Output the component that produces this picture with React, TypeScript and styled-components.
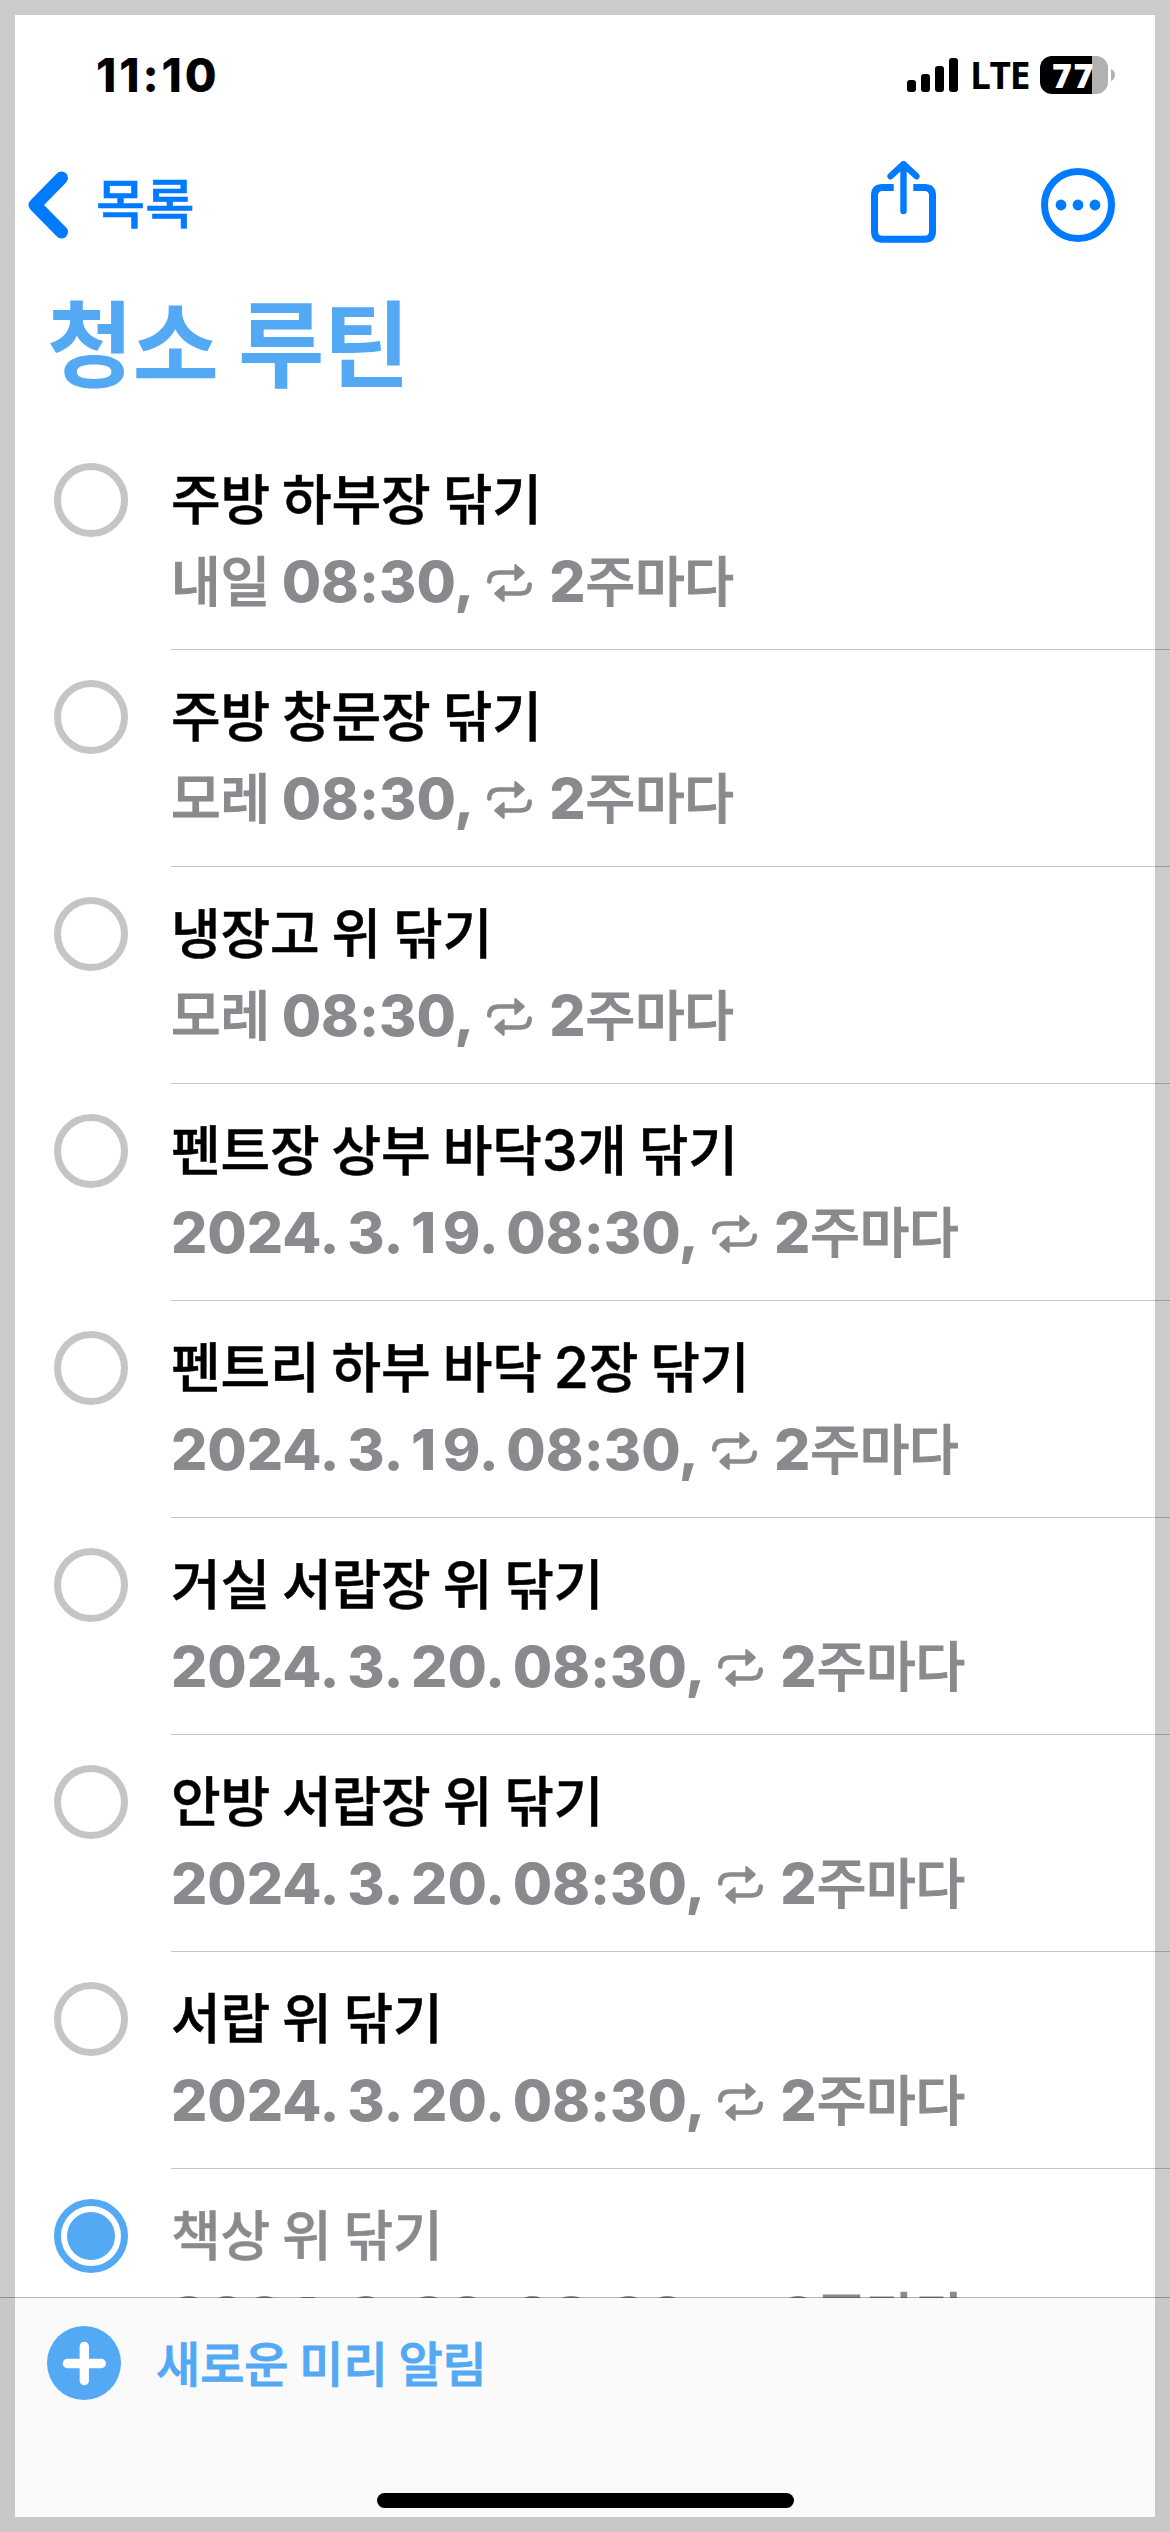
import React from "react";
import styled, { createGlobalStyle } from "styled-components";

const BLUE = "#007aff";
const SKY = "#53a9f3";
const GRAY = "#8a8a8e";
const KR = `"Noto Sans CJK KR", "Noto Sans", sans-serif`;
const LATIN = `Inter, "Noto Sans CJK KR", sans-serif`;
const STATUS = `"Open Sans", "Noto Sans", sans-serif`;

const GlobalStyle = createGlobalStyle`
  * { box-sizing: border-box; }
  body { margin: 0; background: #fff; }
`;

const Screen = styled.div`
  position: relative;
  display: flex;
  flex-direction: column;
  width: 1170px;
  height: 2532px;
  overflow: hidden;
  background: #fff;
  font-family: ${KR};
`;

const Frame = styled.div`
  position: absolute;
  inset: 0;
  border: 15px solid rgba(0, 0, 0, 0.2);
  pointer-events: none;
`;

const StatusBar = styled.header`
  display: flex;
  justify-content: space-between;
  align-items: center;
  height: 133px;
  padding: 16px 55px 0 96px;
`;

const Clock = styled.time`
  font: 800 46px/46px ${LATIN};
  letter-spacing: 2.9px;
  color: #000;
`;

const StatusIcons = styled.div`
  display: flex;
  align-items: center;
`;

const Network = styled.span`
  width: 66px;
  padding-left: 10px;
  font: 700 37px/38px ${STATUS};
  letter-spacing: -1.3px;
  white-space: nowrap;
  color: #000;
`;

const Battery = styled.div`
  display: flex;
  align-items: center;
  gap: 3px;
  margin-left: 14px;
`;

const BatteryBody = styled.div<{ $level: number }>`
  width: 68px;
  height: 38px;
  padding-left: 12px;
  border-radius: 12px;
  background: linear-gradient(to right, #000 ${(p) => p.$level}%, #b1b1b1 ${(p) => p.$level}%);
  font: 800 34px/38px ${STATUS};
  letter-spacing: 1.5px;
  color: #fff;
`;

const NavBar = styled.nav`
  display: flex;
  justify-content: space-between;
  height: 144px;
  padding: 27px 55px 0 28px;
`;

const BackButton = styled.button`
  display: flex;
  align-items: center;
  height: 90px;
  gap: 27px;
  padding: 0;
  border: 0;
  background: none;
  font: 500 53.5px/90px ${KR};
  -webkit-text-stroke: 0.6px ${BLUE};
  color: ${BLUE};
`;

const BackLabel = styled.span`
  padding-bottom: 8px;
`;

const NavActions = styled.div`
  display: flex;
  align-items: center;
  gap: 105px;
  height: 90px;
`;

const ListTitle = styled.h1`
  height: 156px;
  margin: 0;
  padding: 12px 0 0 47px;
  font: 700 94px/100px ${KR};
  letter-spacing: -1.1px;
  color: ${SKY};
`;

const List = styled.ul`
  flex: 1;
  min-height: 0;
  margin: 0;
  padding: 0;
  overflow: hidden;
  list-style: none;
`;

const Item = styled.li`
  display: flex;
  height: 217px;
  padding: 0 0 0 54px;
`;

const Check = styled.span<{ $done?: boolean }>`
  flex: none;
  width: 74px;
  height: 74px;
  margin: 30px 43px 0 0;
  padding: 6px;
  border: 7px solid ${(p) => (p.$done ? SKY : "#c5c5c7")};
  border-radius: 50%;
  background: ${(p) => (p.$done ? SKY : "transparent")} content-box;
`;

const ItemBody = styled.div`
  flex: 1;
  padding-top: 23px;
  border-bottom: 1px solid #c6c6c8;
  white-space: nowrap;
`;

const ItemTitle = styled.div<{ $done?: boolean }>`
  font: 500 54px/82px ${KR};
  letter-spacing: -0.15px;
  -webkit-text-stroke: 0.5px currentColor;
  color: ${(p) => (p.$done ? GRAY : "#000")};
`;

const ItemMeta = styled.div`
  font: 500 54px/82px ${KR};
  letter-spacing: -0.3px;
  -webkit-text-stroke: 1px currentColor;
  color: ${GRAY};
`;

const TitleDigits = styled.span`
  font: 500 57px/0 ${LATIN};
`;

const MetaDigits = styled.span`
  font: 800 57px/0 ${LATIN};
  letter-spacing: 0;
  word-spacing: -2.5px;
  -webkit-text-stroke: 0;
`;

const WideOne = styled.span`
  letter-spacing: 6.5px;
`;

const RepeatSvg = styled.svg`
  margin: 0 17px 0 13px;
  vertical-align: baseline;
`;

const Footer = styled.footer`
  position: relative;
  height: 235px;
  margin-top: -1px;
  padding-top: 28px;
  border-top: 1px solid rgba(0, 0, 0, 0.3);
  background: #fafafa padding-box;
`;

const NewReminder = styled.button`
  display: flex;
  align-items: center;
  gap: 35px;
  height: 74px;
  margin-left: 47px;
  padding: 0;
  border: 0;
  background: none;
  font: 500 48px/74px ${KR};
  -webkit-text-stroke: 1px ${SKY};
  color: ${SKY};
`;

const NewReminderLabel = styled.span`
  padding-bottom: 5px;
`;

const HomeIndicator = styled.div`
  width: 417px;
  height: 15px;
  margin: 93px auto 0;
  border-radius: 8px;
  background: #000;
`;

const SignalIcon = () => (
  <svg width="53" height="34" viewBox="0 0 53 34">
    <rect x="0" y="22" width="9" height="12" rx="3" />
    <rect x="14" y="16" width="9" height="18" rx="3" />
    <rect x="28" y="8" width="9" height="26" rx="3" />
    <rect x="42" y="0" width="9" height="34" rx="3" />
  </svg>
);

const BackIcon = () => (
  <svg width="41" height="68" viewBox="0 0 41 68" fill="none" stroke={BLUE} strokeWidth="13" strokeLinecap="round" strokeLinejoin="round">
    <path d="M33.5 7 7 34 33.5 61" />
  </svg>
);

const ShareIcon = () => (
  <svg width="65" height="88" viewBox="0 0 65 88" fill="none" stroke={BLUE} strokeWidth="7">
    <path d="M22.7 26.5H11.5Q3.5 26.5 3.5 34.5V70.2Q3.5 78.2 11.5 78.2H53.5Q61.5 78.2 61.5 70.2V34.5Q61.5 26.5 53.5 26.5H42.3" />
    <path d="M32.5 4V50M19.6 15.2 32.5 3.2 45.4 15.2" strokeWidth="6.4" strokeLinecap="round" strokeLinejoin="round" />
  </svg>
);

const MoreIcon = () => (
  <svg width="74" height="74" viewBox="0 0 74 74" fill={BLUE}>
    <circle cx="37" cy="37" r="33.5" fill="none" stroke={BLUE} strokeWidth="7" />
    <circle cx="20" cy="37" r="5.4" />
    <circle cx="37" cy="37" r="5.4" />
    <circle cx="54" cy="37" r="5.4" />
  </svg>
);

const RepeatIcon = () => (
  <RepeatSvg width="45" height="38" viewBox="0 0 45 38" fill="none" stroke={GRAY} strokeWidth="4.6" strokeLinecap="round">
    <path d="M2.3 17.5Q2.3 8.5 12 8.5H28" />
    <path d="M42.7 20.5Q42.7 29.5 33 29.5H17" />
    <path d="M28.5 1.3 36.5 8.5 28.5 15.7ZM16.5 22.3 8.5 29.5 16.5 36.7Z" fill={GRAY} strokeWidth="2.4" strokeLinejoin="round" />
  </RepeatSvg>
);

const PlusIcon = () => (
  <svg width="74" height="74" viewBox="0 0 74 74">
    <circle cx="37" cy="37" r="37" fill={SKY} />
    <path d="M37.3 20.3V54.7M20.3 37.5H54.3" stroke="#fff" strokeWidth="9.3" strokeLinecap="round" />
  </svg>
);

// The figure 1 is narrow in Inter; it gets a little room on its right.
const widenOnes = (text: string) =>
  text
    .split(/(1)/)
    .filter(Boolean)
    .map((part, i) => (part === "1" ? <WideOne key={i}>1</WideOne> : part));

// Sets runs of digits and punctuation in the Latin face, the rest in the Korean one.
const mixed = (text: string, Digits: React.ElementType) =>
  text
    .split(/(\d[\d.:, ]*[\d.:,]|\d)/)
    .filter(Boolean)
    .map((part, i) => (/^\d/.test(part) ? <Digits key={i}>{widenOnes(part)}</Digits> : part));

const reminders = [
  { title: "주방 하부장 닦기", due: "내일 08:30," },
  { title: "주방 창문장 닦기", due: "모레 08:30," },
  { title: "냉장고 위 닦기", due: "모레 08:30," },
  { title: "펜트장 상부 바닥3개 닦기", due: "2024. 3. 19. 08:30," },
  { title: "펜트리 하부 바닥 2장 닦기", due: "2024. 3. 19. 08:30," },
  { title: "거실 서랍장 위 닦기", due: "2024. 3. 20. 08:30," },
  { title: "안방 서랍장 위 닦기", due: "2024. 3. 20. 08:30," },
  { title: "서랍 위 닦기", due: "2024. 3. 20. 08:30," },
  { title: "책상 위 닦기", due: "2024. 3. 20. 08:30,", done: true },
];

export default function App() {
  return (
    <Screen>
      <GlobalStyle />
      <StatusBar>
        <Clock>11:10</Clock>
        <StatusIcons>
          <SignalIcon />
          <Network>LTE</Network>
          <Battery>
            <BatteryBody $level={77}>77</BatteryBody>
            <svg width="4" height="12" viewBox="0 0 4 12">
              <path d="M0 0Q4 2 4 6T0 12Z" fill="#b1b1b1" />
            </svg>
          </Battery>
        </StatusIcons>
      </StatusBar>
      <NavBar>
        <BackButton>
          <BackIcon />
          <BackLabel>목록</BackLabel>
        </BackButton>
        <NavActions>
          <ShareIcon />
          <MoreIcon />
        </NavActions>
      </NavBar>
      <ListTitle>청소 루틴</ListTitle>
      <List>
        {reminders.map((r) => (
          <Item key={r.title}>
            <Check $done={r.done} />
            <ItemBody>
              <ItemTitle $done={r.done}>{mixed(r.title, TitleDigits)}</ItemTitle>
              <ItemMeta>
                {mixed(r.due, MetaDigits)}
                <RepeatIcon />
                {mixed("2주마다", MetaDigits)}
              </ItemMeta>
            </ItemBody>
          </Item>
        ))}
      </List>
      <Footer>
        <NewReminder>
          <PlusIcon />
          <NewReminderLabel>새로운 미리 알림</NewReminderLabel>
        </NewReminder>
        <HomeIndicator />
      </Footer>
      <Frame />
    </Screen>
  );
}
